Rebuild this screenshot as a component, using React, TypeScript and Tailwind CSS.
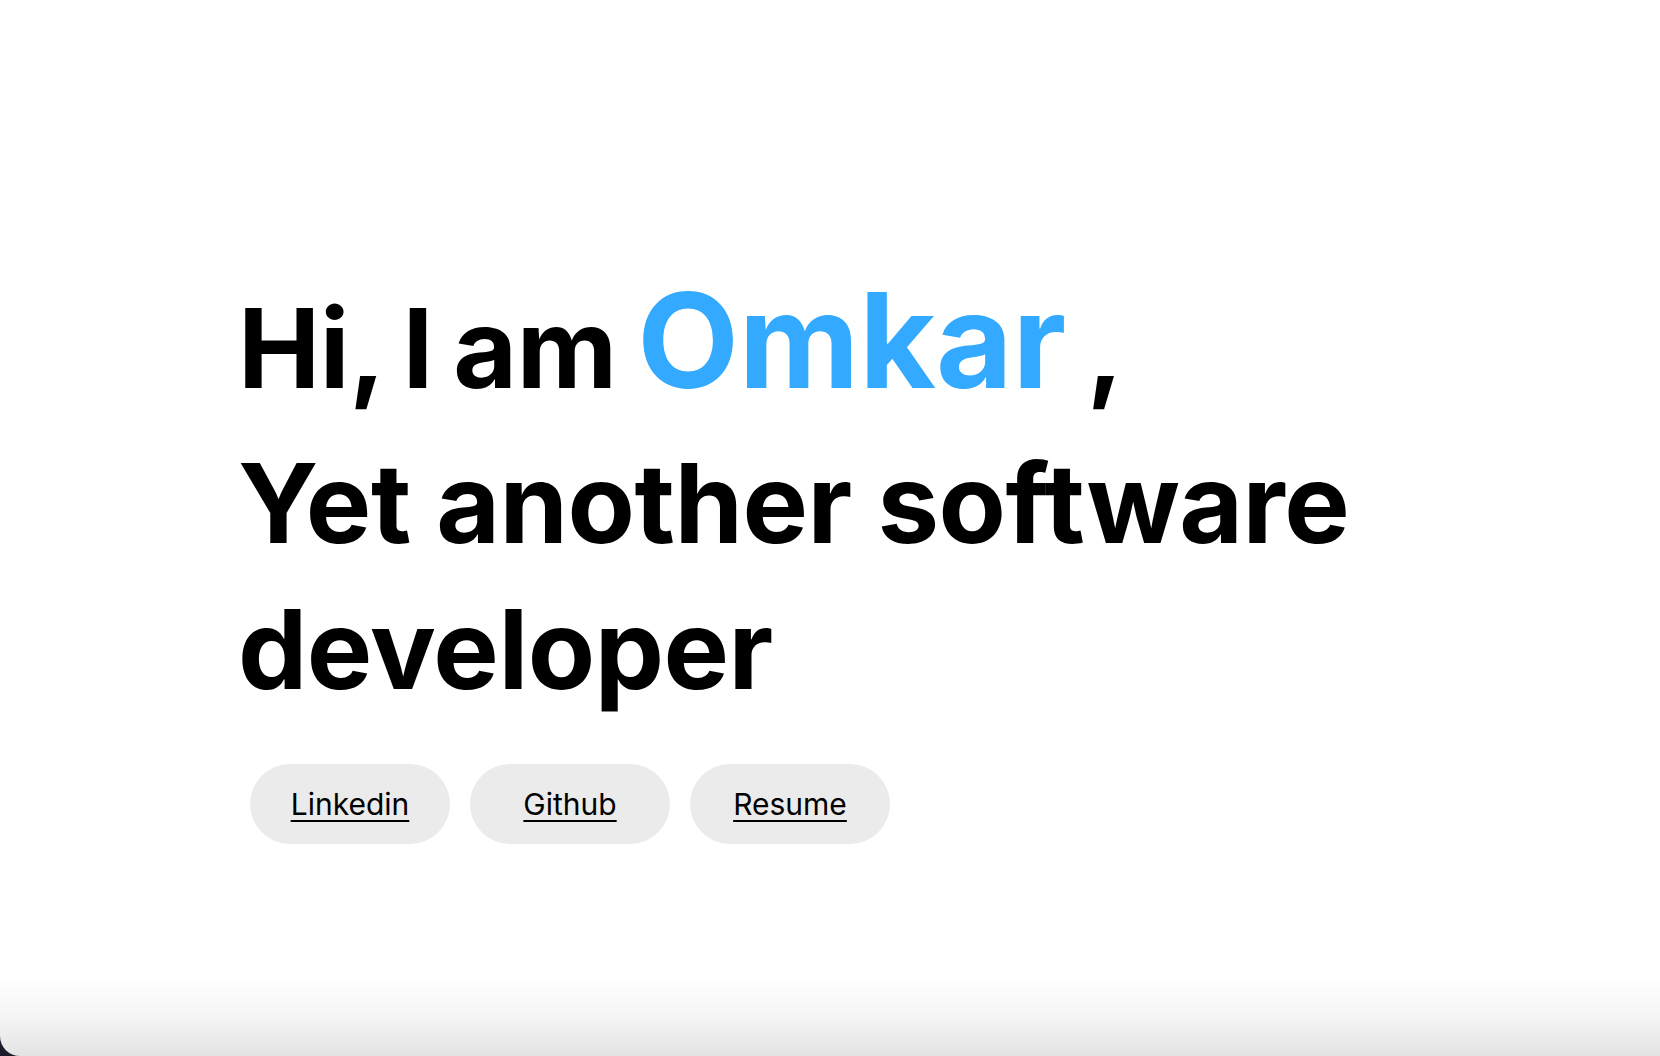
const links = ["Linkedin", "Github", "Resume"];

const App = () => {
  return (
    <div className="h-screen w-full overflow-hidden bg-[#1b1e2a]">
      <div
        className="h-full w-full rounded-bl-[20px] bg-[linear-gradient(to_bottom,#ffffff_0%,#ffffff_92.5%,#f6f6f6_96%,#e3e3e3_100%)] pl-[238px] pt-[250px]"
        style={{ fontFamily: "Inter, 'Noto Sans', sans-serif" }}
      >
        {/* Heading */}
        <h1 className="text-[110px] font-bold leading-[146px] tracking-[-0.5px] text-black">
          <span className="block [word-spacing:-5px]">
            Hi, I am{" "}
            <span className="text-[132px] leading-[180px] tracking-[0px] text-[#33aaff]">Omkar</span> ,
          </span>
          <span className="block max-w-[1200px]">Yet another software developer</span>
        </h1>

        {/* Links */}
        <div className="ml-3 mt-[42px] flex gap-5">
          {links.map((label) => (
            <a
              key={label}
              href="#"
              className="flex h-20 w-[200px] items-center justify-center rounded-full bg-[#ebebeb] text-[30px] text-black underline decoration-2 underline-offset-[5px]"
            >
              {label}
            </a>
          ))}
        </div>
      </div>
    </div>
  );
};

export default App;
